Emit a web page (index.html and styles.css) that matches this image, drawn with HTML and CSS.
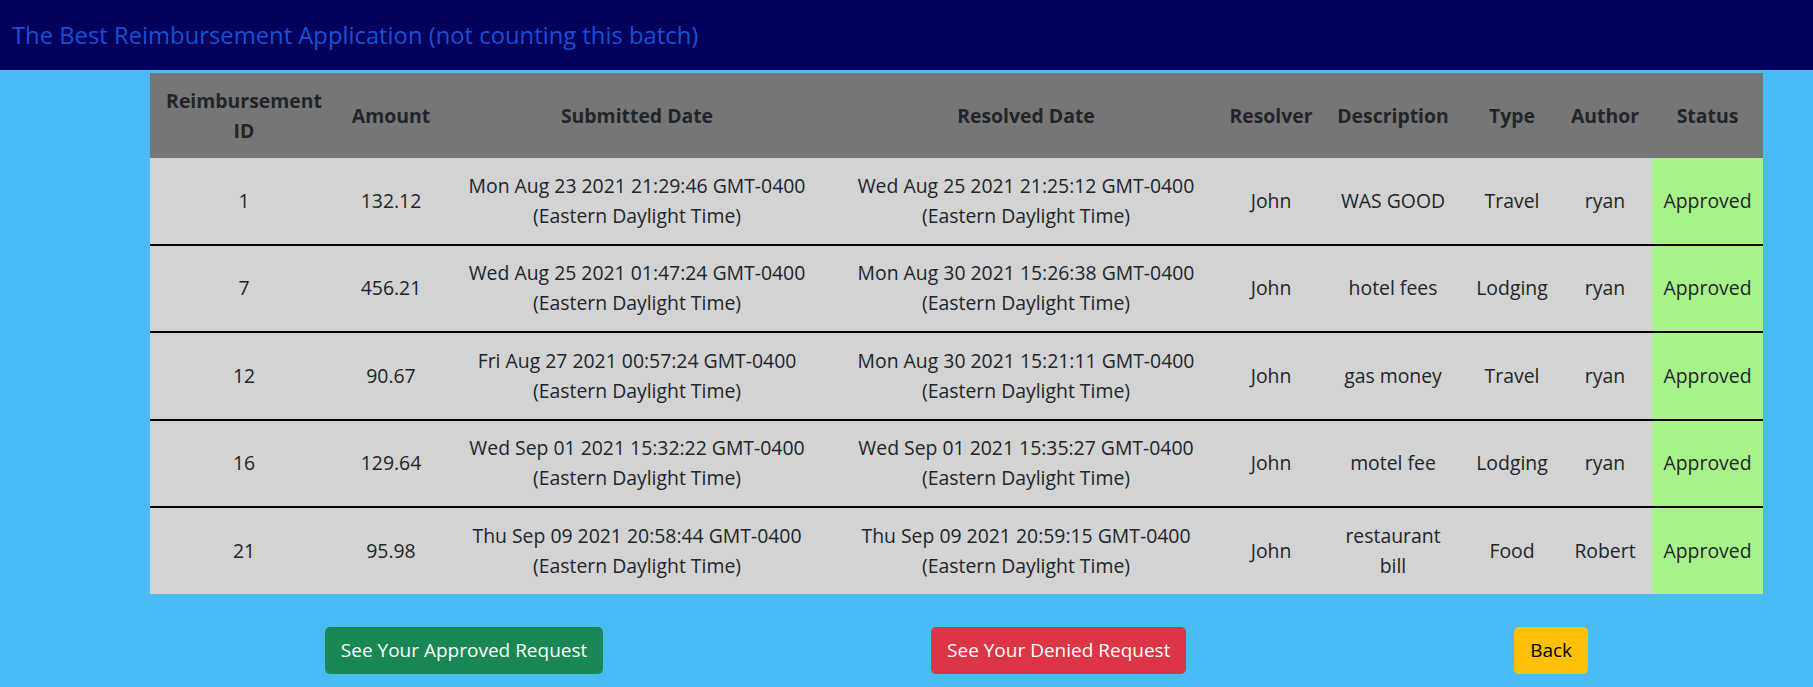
FILE: index.html
```html
<!DOCTYPE html>
<html lang="en">
<head>
<meta charset="utf-8">
<title>Reimbursements</title>
<link rel="stylesheet" href="styles.css">
</head>
<body>
<nav class="navbar">
  <span class="brand">The Best Reimbursement Application (not counting this batch)</span>
</nav>
<main class="content">
  <table class="reimb-table">
    <colgroup>
      <col class="c-id"><col class="c-amount"><col class="c-sub"><col class="c-res"><col class="c-resolver"><col class="c-desc"><col class="c-type"><col class="c-author"><col class="c-status">
    </colgroup>
    <thead>
      <tr>
        <th>Reimbursement ID</th><th>Amount</th><th>Submitted Date</th><th>Resolved Date</th><th>Resolver</th><th>Description</th><th>Type</th><th>Author</th><th>Status</th>
      </tr>
    </thead>
    <tbody>
      <tr>
        <td>1</td><td>132.12</td><td>Mon Aug 23 2021 21:29:46 GMT-0400 (Eastern Daylight Time)</td><td>Wed Aug 25 2021 21:25:12 GMT-0400 (Eastern Daylight Time)</td><td>John</td><td>WAS GOOD</td><td>Travel</td><td>ryan</td><td class="approved">Approved</td>
      </tr>
      <tr>
        <td>7</td><td>456.21</td><td>Wed Aug 25 2021 01:47:24 GMT-0400 (Eastern Daylight Time)</td><td>Mon Aug 30 2021 15:26:38 GMT-0400 (Eastern Daylight Time)</td><td>John</td><td>hotel fees</td><td>Lodging</td><td>ryan</td><td class="approved">Approved</td>
      </tr>
      <tr>
        <td>12</td><td>90.67</td><td>Fri Aug 27 2021 00:57:24 GMT-0400 (Eastern Daylight Time)</td><td>Mon Aug 30 2021 15:21:11 GMT-0400 (Eastern Daylight Time)</td><td>John</td><td>gas money</td><td>Travel</td><td>ryan</td><td class="approved">Approved</td>
      </tr>
      <tr>
        <td>16</td><td>129.64</td><td>Wed Sep 01 2021 15:32:22 GMT-0400 (Eastern Daylight Time)</td><td>Wed Sep 01 2021 15:35:27 GMT-0400 (Eastern Daylight Time)</td><td>John</td><td>motel fee</td><td>Lodging</td><td>ryan</td><td class="approved">Approved</td>
      </tr>
      <tr>
        <td>21</td><td>95.98</td><td>Thu Sep 09 2021 20:58:44 GMT-0400 (Eastern Daylight Time)</td><td>Thu Sep 09 2021 20:59:15 GMT-0400 (Eastern Daylight Time)</td><td>John</td><td class="desc">restaurant bill</td><td>Food</td><td>Robert</td><td class="approved">Approved</td>
      </tr>
    </tbody>
  </table>
  <div class="actions">
    <button class="btn btn-success">See Your Approved Request</button>
    <button class="btn btn-danger">See Your Denied Request</button>
    <button class="btn btn-warning">Back</button>
  </div>
</main>
</body>
</html>
```
FILE: styles.css
```css
* { box-sizing: border-box; }
html, body { margin: 0; padding: 0; }
body {
  background: #4abbf4;
  font-family: "Open Sans", "Noto Sans", sans-serif;
  font-size: 19.4px;
  line-height: 30px;
  color: #212529;
  height: 687px;
  overflow: hidden;
}
.navbar {
  height: 70px;
  background: #03005c;
  display: flex;
  align-items: center;
  padding: 0 12px;
}
.brand {
  color: #1650d6;
  font-size: 23.8px;
  line-height: 30px;
}
.content {
  padding: 3px 50px 0 150px;
}
.reimb-table {
  width: 1613px;
  table-layout: fixed;
  border-collapse: collapse;
  text-align: center;
}
.c-id { width: 188px; }
.c-amount { width: 106px; }
.c-sub { width: 386px; }
.c-res { width: 392px; }
.c-resolver { width: 98px; }
.c-desc { width: 146px; }
.c-type { width: 92px; }
.c-author { width: 94px; }
.c-status { width: 111px; }
.reimb-table thead tr { background: #767676; }
.reimb-table th {
  font-weight: 700;
  padding: 12.5px 6px;
  vertical-align: middle;
}
.reimb-table tbody tr { background: #d3d3d3; }
.reimb-table tbody tr + tr { border-top: 2px solid #000; }
.reimb-table td {
  padding: 12.75px 10px;
  vertical-align: middle;
}
.reimb-table td.desc { padding: 12.75px 16px; }
.reimb-table td.approved { background: #a8f28a; }
.actions {
  display: flex;
  justify-content: space-around;
  padding: 33px 11px 0;
}
.btn {
  font-family: inherit;
  font-size: 19px;
  line-height: 30px;
  padding: 7.5px 15px;
  border: 1px solid transparent;
  border-radius: 5px;
  cursor: pointer;
}
.btn-success { background: #198754; color: #fff; }
.btn-danger { background: #dc3545; color: #fff; }
.btn-warning { background: #ffc107; color: #000; }
```
